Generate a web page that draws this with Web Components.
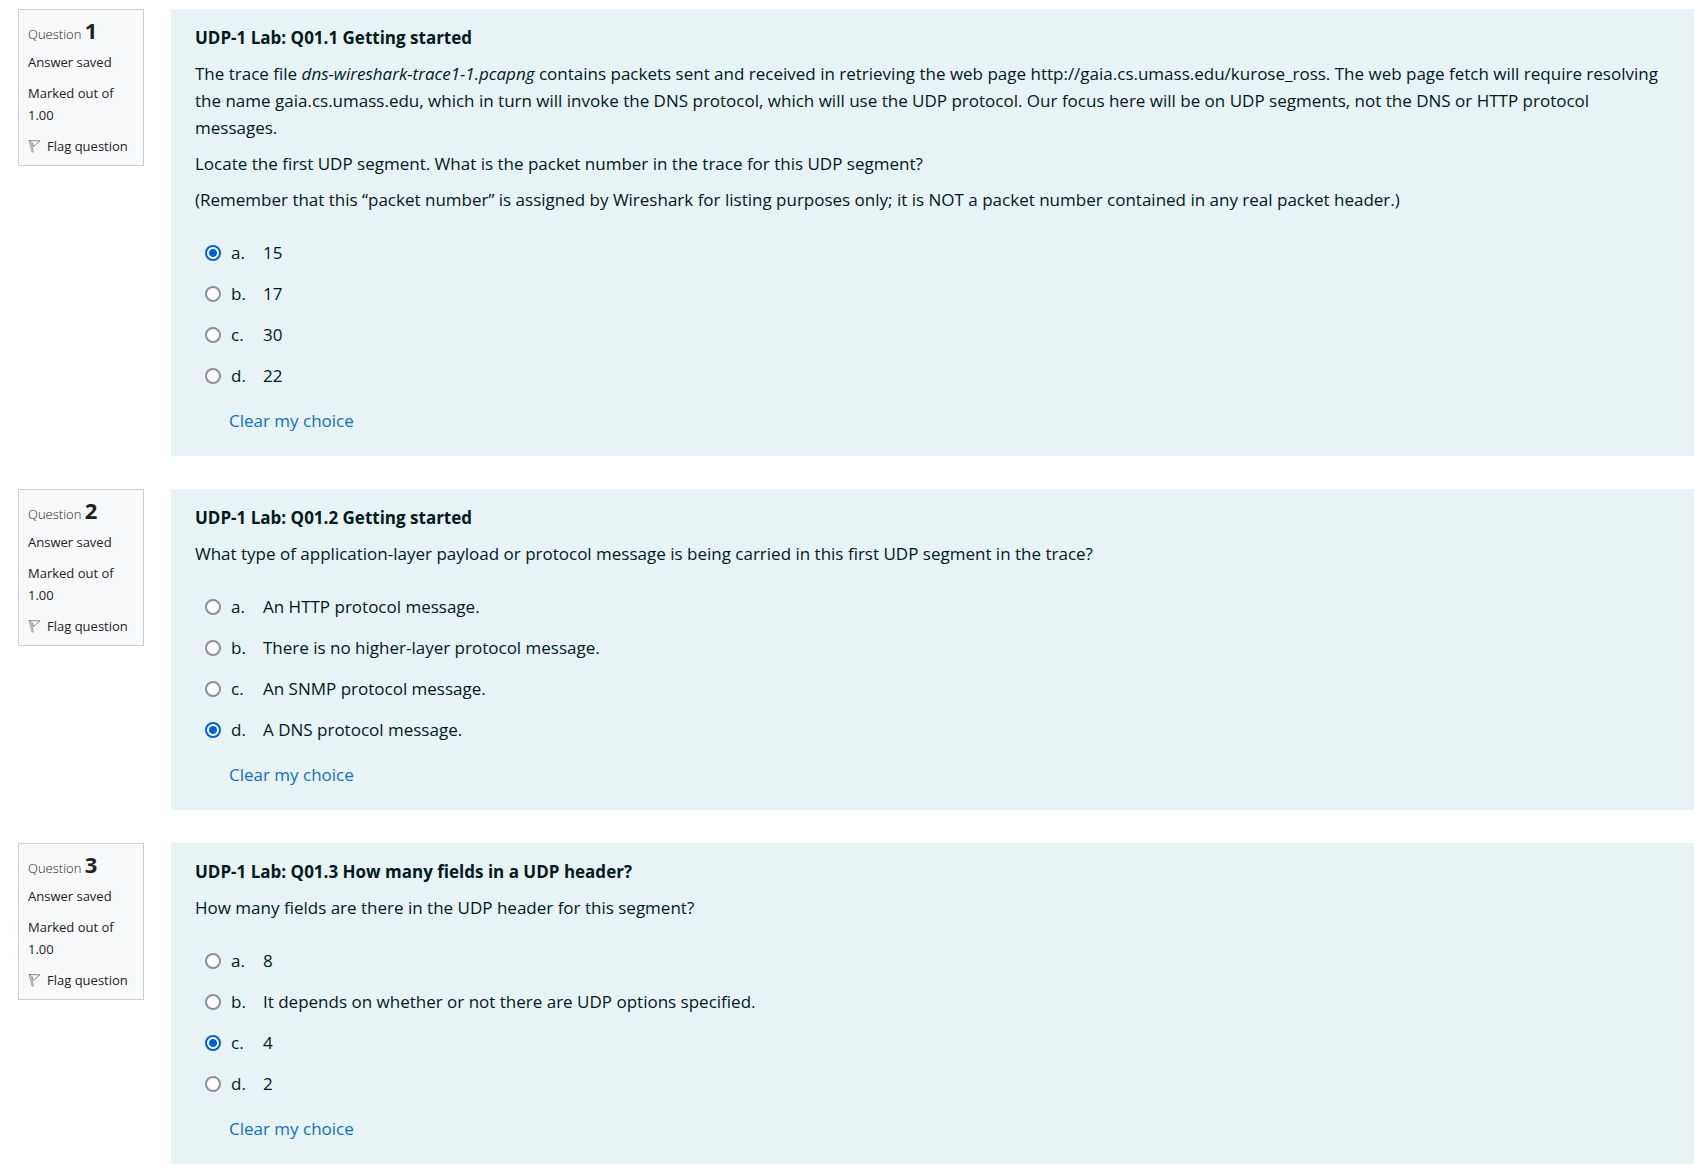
<!DOCTYPE html>
<html lang="en">
<head>
<meta charset="utf-8">
<title>UDP-1 Lab</title>
<style>
body { margin: 0; background: #fff; font-family: "Open Sans", "Noto Sans", sans-serif; font-size: 17px; line-height: 27px; color: #001a1e; }
</style>
</head>
<body>
<quiz-page>
  <quiz-question number="1">
    <strong>UDP-1 Lab: Q01.1 Getting started</strong>
    <p>The trace file <em>dns-wireshark-trace1-1.pcapng</em> contains packets sent and received in retrieving the web page http://gaia.cs.umass.edu/kurose_ross. The web page fetch will require resolving the name gaia.cs.umass.edu, which in turn will invoke the DNS protocol, which will use the UDP protocol. Our focus here will be on UDP segments, not the DNS or HTTP protocol messages.</p>
    <p>Locate the first UDP segment. What is the packet number in the trace for this UDP segment?</p>
    <p>(Remember that this “packet number” is assigned by Wireshark for listing purposes only; it is NOT a packet number contained in any real packet header.)</p>
    <quiz-answers slot="answers" name="q1" checked="0" options="15|17|30|22"></quiz-answers>
  </quiz-question>
  <quiz-question number="2">
    <strong>UDP-1 Lab: Q01.2 Getting started</strong>
    <p>What type of application-layer payload or protocol message is being carried in this first UDP segment in the trace?</p>
    <quiz-answers slot="answers" name="q2" checked="3" options="An HTTP protocol message.|There is no higher-layer protocol message.|An SNMP protocol message.|A DNS protocol message."></quiz-answers>
  </quiz-question>
  <quiz-question number="3">
    <strong>UDP-1 Lab: Q01.3 How many fields in a UDP header?</strong>
    <p>How many fields are there in the UDP header for this segment?</p>
    <quiz-answers slot="answers" name="q3" checked="2" options="8|It depends on whether or not there are UDP options specified.|4|2"></quiz-answers>
  </quiz-question>
</quiz-page>
<script>
class QuizPage extends HTMLElement {
  constructor() {
    super();
    this.attachShadow({ mode: "open" }).innerHTML = `
      <style>
        :host { display: block; }
        main { display: flex; flex-direction: column; gap: 33px; padding: 9px 0 0 18px; }
      </style>
      <main><slot></slot></main>`;
  }
}

class QuestionInfo extends HTMLElement {
  connectedCallback() {
    this.attachShadow({ mode: "open" }).innerHTML = `
      <style>
        :host { display: block; box-sizing: border-box; width: 126px; flex: none; padding: 9px 9px 8px; border: 1px solid #cad0d7; background: #f8f9fa; color: #1d2125; font-size: 13px; line-height: 22px; }
        h3 { margin: 0; font-size: 13px; font-weight: 300; line-height: 27px; }
        h3 span { font-size: 22px; font-weight: 700; line-height: 22px; }
        div { margin-top: 9px; }
        h3 + div { margin-top: 3px; }
        a { display: flex; align-items: center; gap: 6px; color: inherit; text-decoration: none; white-space: nowrap; }
        svg { width: 13px; height: 14px; flex: none; }
      </style>
      <h3>Question <span>${this.getAttribute("number")}</span></h3>
      <div>Answer saved</div>
      <div>Marked out of 1.00</div>
      <div><a href="#flag"><svg viewBox="0 0 13 14" fill="none" stroke="#77797b" stroke-linejoin="round"><path d="M1 1.6 4.2 13.2 5.3 12.9 2.4 1.4Z" stroke-width=".7"/><path d="M1 1.5 12 1.9 5.2 7.6 4 3.2" stroke-width=".9"/></svg>Flag question</a></div>`;
  }
}

class QuizQuestion extends HTMLElement {
  connectedCallback() {
    this.attachShadow({ mode: "open" }).innerHTML = `
      <style>
        :host { display: flex; align-items: flex-start; gap: 27px; }
        section { flex: 1; min-width: 0; padding: 15px 24px 22px; background: #e7f3f5; }
        ::slotted(strong) { display: block; }
        ::slotted(p) { margin: 9px 0 0; }
      </style>
      <question-info number="${this.getAttribute("number")}"></question-info>
      <section><slot></slot><slot name="answers"></slot></section>`;
  }
}

class QuizAnswers extends HTMLElement {
  connectedCallback() {
    const name = this.getAttribute("name");
    const checked = Number(this.getAttribute("checked"));
    const rows = this.getAttribute("options").split("|").map((text, i) => `
      <div class="row"><input type="radio" name="${name}" id="${name}-${i}"${i === checked ? " checked" : ""}><label for="${name}-${i}"><span>${"abcd"[i]}.</span><span>${text}</span></label></div>`).join("");
    this.attachShadow({ mode: "open" }).innerHTML = `
      <style>
        :host { display: block; padding-top: 19px; }
        .row { display: flex; align-items: center; gap: 10px; height: 41px; padding-left: 10px; }
        input { appearance: none; box-sizing: border-box; width: 16px; height: 16px; flex: none; margin: 0; border: 2px solid #8f8f9d; border-radius: 50%; background: #fff; }
        input:checked { border-color: #0060df; background: radial-gradient(circle, #0060df 3.5px, #fff 4.5px); }
        label { display: flex; }
        label span:first-child { width: 32px; }
        a { display: block; width: fit-content; margin: 11px 0 0 34px; color: #0f6fc5; text-decoration: none; }
      </style>
      ${rows}
      <a href="#clear">Clear my choice</a>`;
  }
}

customElements.define("quiz-page", QuizPage);
customElements.define("question-info", QuestionInfo);
customElements.define("quiz-question", QuizQuestion);
customElements.define("quiz-answers", QuizAnswers);
</script>
</body>
</html>
